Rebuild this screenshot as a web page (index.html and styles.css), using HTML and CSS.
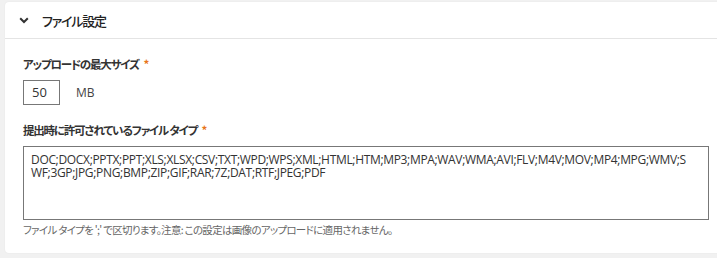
FILE: index.html
```html
<!DOCTYPE html>
<html lang="ja">
<head>
<meta charset="utf-8">
<link rel="stylesheet" href="styles.css">
</head>
<body>
<section class="card">
  <header class="card-header">
    <svg class="chevron" width="10" height="7" viewBox="0 0 10 7"><path d="M1.2 1.2 L5 5 L8.8 1.2" fill="none" stroke="#333" stroke-width="2"/></svg>
    <h2 class="card-title">ファイル設定</h2>
  </header>
  <div class="card-body">
    <div class="field">
      <label class="label">アップロードの最大サイズ <span class="req">*</span></label>
      <div class="size-row">
        <div class="num-input">50</div>
        <span class="unit">MB</span>
      </div>
    </div>
    <div class="field">
      <label class="label">提出時に許可されているファイル タイプ <span class="req">*</span></label>
      <div class="textarea">DOC;DOCX;PPTX;PPT;XLS;XLSX;CSV;TXT;WPD;WPS;XML;HTML;HTM;MP3;MPA;WAV;WMA;AVI;FLV;M4V;MOV;MP4;MPG;WMV;SWF;3GP;JPG;PNG;BMP;ZIP;GIF;RAR;7Z;DAT;RTF;JPEG;PDF</div>
      <p class="help">ファイル タイプを ';' で区切ります。注意: この設定は画像のアップロードに適用されません。</p>
    </div>
  </div>
</section>
</body>
</html>
```
FILE: styles.css
```css
html, body { margin: 0; padding: 0; }
body {
  background: #f1f1f1;
  font-family: "Open Sans", "Noto Sans CJK JP", sans-serif;
  color: #333;
  width: 717px;
  height: 258px;
  overflow: hidden;
  padding-top: 2px;
  box-sizing: border-box;
}
.card {
  margin-left: 5px;
  width: 730px;
  height: 251px;
  background: #fff;
  border-radius: 4px;
  box-shadow: 0 0 2px rgba(0,0,0,0.06);
}
.card-header {
  height: 36px;
  border-bottom: 1px solid #e4e4e4;
  display: flex;
  align-items: center;
  padding-left: 14px;
}
.chevron { margin-right: 13px; margin-top: 1px; }
.card-title {
  margin: 0;
  font-family: "Noto Sans CJK JP", sans-serif;
  font-feature-settings: "palt";
  font-size: 13px;
  letter-spacing: -1.2px;
  font-weight: 500;
  color: #222;
}
.card-body { padding: 17px 0 0 18px; }
.field { display: flex; flex-direction: column; }
.label {
  font-family: "Noto Sans CJK JP", sans-serif;
  font-feature-settings: "palt";
  font-size: 11.5px;
  letter-spacing: -1.2px;
  font-weight: 700;
  color: #333;
  line-height: 17px;
}
.req { color: #e8761c; font-weight: 700; margin-left: 3px; letter-spacing: 0; }
.size-row { display: flex; align-items: center; margin-top: 7px; margin-bottom: 17px; }
.num-input {
  width: 37px;
  height: 25px;
  box-sizing: border-box;
  border: 1px solid #777;
  font-size: 13px;
  line-height: 23px;
  padding-left: 8px;
  color: #333;
}
.unit { margin-left: 16px; font-size: 12px; color: #444; }
.textarea {
  margin-top: 7px;
  width: 686px;
  height: 74px;
  box-sizing: border-box;
  border: 1px solid #777;
  padding: 6px 18px 6px 7px;
  font-size: 12px;
  letter-spacing: -0.33px;
  line-height: 13px;
  word-break: break-all;
  color: #333;
}
.help {
  margin: 2px 0 0;
  font-family: "Noto Sans CJK JP", sans-serif;
  font-feature-settings: "palt";
  font-size: 10.5px;
  letter-spacing: -0.7px;
  color: #666;
  line-height: 15px;
}
```
